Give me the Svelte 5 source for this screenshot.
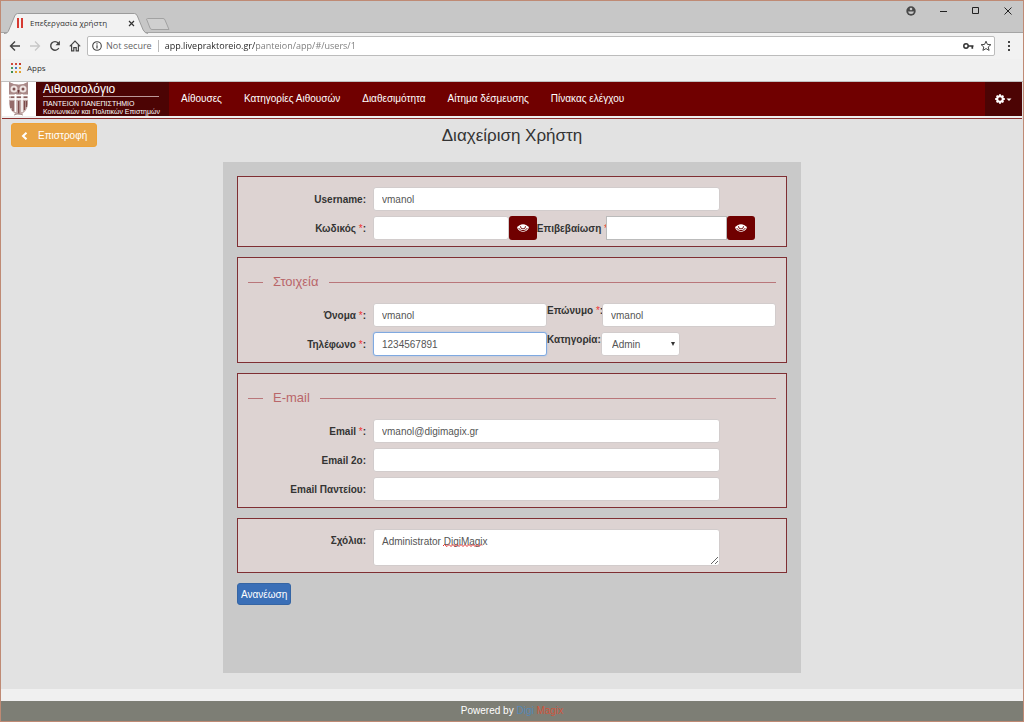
<script>
	let user = $state({
		username: 'vmanol',
		password: '',
		confirm: '',
		name: 'vmanol',
		surname: 'vmanol',
		phone: '1234567891',
		role: 'Admin',
		email: 'vmanol@digimagix.gr',
		email2: '',
		emailPanteion: '',
		comments: 'Administrator DigiMagix'
	});
	let address = $state('app.livepraktoreio.gr/panteion/app/#/users/1');
	let showPassword = $state(false);
	let showConfirm = $state(false);

	const menu = ['Αίθουσες', 'Κατηγορίες Αιθουσών', 'Διαθεσιμότητα', 'Αίτημα δέσμευσης', 'Πίνακας ελέγχου'];
	const dots = ['#d04a3c', '#d04a3c', '#c23a2c', '#4a9a5a', '#4a78c8', '#e0a030', '#3f8f50', '#e0a030', '#e0a030'];
</script>

{#snippet eye()}
	<svg width="12" height="10" viewBox="0 0 12 10">
		<path d="M0 4.800C2.500 0 9.500 0 12 4.800 9.500 10 2.500 10 0 4.800Z" fill="#fff" />
		<path d="M1.800 5.200C3.500 8.400 8.500 8.400 10.200 5.200" fill="none" stroke="#700000" />
		<path d="M3.500 3.200Q3.200 5.800 6 5.900 8.800 5.800 8.500 3.200" fill="none" stroke="#700000" stroke-width=".9" />
	</svg>
{/snippet}

<div class="window">
	<div class="titlebar">
		<div class="tab">
			<svg class="shape" width="146" height="21" viewBox="0 0 150 21" preserveAspectRatio="none">
				<path d="M0 20.500C3 20.500 4 19.500 5 17L11 3Q12 .5 14 .5H134Q136 .5 137 3L143 17Q145 20.500 148 20.500V21H0Z" fill="#f2f2f2" />
				<path d="M0 20.500C3 20.500 4 19.500 5 17L11 3Q12 .5 14 .5H134Q136 .5 137 3L143 17Q145 20.500 148 20.500" fill="none" stroke="#999" />
			</svg>
			<svg class="favicon" width="8" height="10" viewBox="0 0 8 10">
				<path d="M1 0h2v10H1zM5 0h2v10H5z" fill="#d63a32" />
			</svg>
			<span class="tab-title">Επεξεργασία χρήστη</span>
			<button class="plain" aria-label="Close tab">
				<svg width="7" height="7" viewBox="0 0 7 7"><path d="M1 1l5 5M6 1l-5 5" stroke="#333" stroke-width="1.200" /></svg>
			</button>
		</div>
		<button class="plain new-tab" aria-label="New tab">
			<svg width="24" height="12" viewBox="0 0 24 12">
				<path d="M1.500 .5H17Q18.500 .5 19 2L23 11.500H6Q4.500 11.500 4 10L.5 1Z" fill="#cfcfcf" stroke="#a2a2a2" />
			</svg>
		</button>
		<div class="controls">
			<button class="plain" aria-label="Profile">
				<svg width="10" height="10" viewBox="0 0 10 10">
					<circle cx="5" cy="5" r="4.700" fill="#484848" />
					<circle cx="5" cy="3" r="1.300" fill="#c9c9c9" />
					<path d="M2 5.500h6Q7.500 8 5 8T2 5.500Z" fill="#c9c9c9" />
				</svg>
			</button>
			<button class="plain" aria-label="Minimize">
				<svg width="8" height="8" viewBox="0 0 8 8"><path d="M0 4.500h7" stroke="#222" /></svg>
			</button>
			<button class="plain" aria-label="Maximize">
				<svg width="8" height="8" viewBox="0 0 8 8"><path d="M.5 .5h6v6h-6z" fill="none" stroke="#222" /></svg>
			</button>
			<button class="plain" aria-label="Close">
				<svg width="8" height="8" viewBox="0 0 8 8"><path d="M.5 .5l7 7M7.500 .5l-7 7" stroke="#222" /></svg>
			</button>
		</div>
	</div>

	<div class="toolbar">
		<button class="plain" aria-label="Back">
			<svg width="12" height="12" viewBox="0 0 12 12"><path d="M11 6H1.500M6 1.500L1.500 6 6 10.500" fill="none" stroke="#444" stroke-width="1.400" /></svg>
		</button>
		<button class="plain" aria-label="Forward">
			<svg width="12" height="12" viewBox="0 0 12 12"><path d="M1 6h9.500M6 1.500L10.500 6 6 10.500" fill="none" stroke="#c8c8c8" stroke-width="1.300" /></svg>
		</button>
		<button class="plain" aria-label="Reload">
			<svg width="12" height="12" viewBox="0 0 12 12">
				<path d="M9.800 8A4.300 4.300 0 1 1 9.200 3" fill="none" stroke="#444" stroke-width="1.400" />
				<path d="M10.900 .8v4.400H6.500z" fill="#444" />
			</svg>
		</button>
		<button class="plain" aria-label="Home">
			<svg width="12" height="12" viewBox="0 0 12 12"><path d="M.8 6.300L6 1l5.200 5.300M2.600 5v5.900h2.200V7.600h2.400v3.300h2.200V5" fill="none" stroke="#444" stroke-width="1.200" /></svg>
		</button>
		<div class="omnibox">
			<svg width="10" height="10" viewBox="0 0 10 10">
				<circle cx="5" cy="5" r="4.300" fill="none" stroke="#444" stroke-width="1.100" />
				<path d="M5 4.300v3.200M5 2.300v1.200" stroke="#444" stroke-width="1.200" />
			</svg>
			<span class="secure">Not secure</span>
			<input class="address" aria-label="Address" bind:value={address} />
			<svg width="11" height="8" viewBox="0 0 11 8">
				<circle cx="3" cy="4" r="2.200" fill="none" stroke="#333" stroke-width="1.500" />
				<path d="M5 4h5.500M9.300 4v2.700" stroke="#333" stroke-width="1.700" />
			</svg>
			<svg width="12" height="12" viewBox="0 0 12 12">
				<path d="M6 1.200l1.400 3.200 3.500.3-2.700 2.300.9 3.400L6 8.600l-3.100 1.800.9-3.400L1.100 4.700l3.500-.3z" fill="none" stroke="#444" />
			</svg>
		</div>
		<button class="plain more" aria-label="Menu">
			<svg width="4" height="12" viewBox="0 0 4 12"><path d="M1 1h2v2H1zM1 5h2v2H1zM1 9h2v2H1z" fill="#444" /></svg>
		</button>
	</div>
	<div class="bookmarks">
		<svg width="10" height="10" viewBox="0 0 10 10">
			{#each dots as fill, i}
				<rect x={(i % 3) * 4} y={Math.floor(i / 3) * 4} width="2" height="2" {fill} />
			{/each}
		</svg>
		<span>Apps</span>
	</div>

	<div class="page">
		<nav>
			<svg class="owl" width="34" height="34" viewBox="0 0 34 34">
				<path d="M7 0Q17 5 26 0V22Q25 31 17 33 8 31 7 22Z" fill="#c3aaa8" />
				<path d="M7 0Q17 6 26 0V12H7Z" fill="#a98988" />
				<circle cx="12" cy="7" r="3.500" fill="#eee4e2" />
				<circle cx="21" cy="7" r="3.500" fill="#eee4e2" />
				<circle cx="12" cy="7" r="1.500" fill="#7c5151" />
				<circle cx="21" cy="7" r="1.500" fill="#7c5151" />
				<path d="M15.500 8h2l-1 4z" fill="#6b3838" />
				<path d="M7 13.500h19M7 17h19" stroke="#fff" stroke-width="1.500" />
				<path d="M13.500 12v18M20 12v18" stroke="#fff" stroke-width="1.500" />
				<path d="M9 19v7M11 19v10M22.500 19v9M24.500 19v6M16.700 19v13" stroke="#7c4a4a" stroke-width="1.300" />
				<path d="M9 15.200h3M15 15.200h4M22 15.200h3" stroke="#87605f" stroke-width="1.500" />
				<path d="M12 33q4-3 9 0" fill="none" stroke="#a58c8a" />
			</svg>
			<a class="brand" href="#/">
				<span class="name">Αιθουσολόγιο</span>
				<span class="org">ΠΑΝΤΕΙΟΝ ΠΑΝΕΠΙΣΤΗΜΙΟ</span>
				<span class="org">Κοινωνικών και Πολιτικών Επιστημών</span>
			</a>
			<div class="menu">
				{#each menu as item}
					<a href="#/">{item}</a>
				{/each}
			</div>
			<button class="settings" aria-label="Ρυθμίσεις">
				<svg width="18" height="10" viewBox="0 0 18 10">
					<circle cx="5" cy="5" r="2.800" fill="none" stroke="#fff" stroke-width="2" />
					<path d="M5 .2v2M5 7.800v2M.2 5h2M7.800 5h2M1.600 1.600l1.400 1.400M7 7l1.400 1.400M8.400 1.600L7 3M3 7L1.600 8.400" stroke="#fff" stroke-width="1.900" />
					<path d="M11.500 4.500h5L14 7z" fill="#fff" />
				</svg>
			</button>
		</nav>

		<header>
			<button class="back">
				<svg width="7" height="8" viewBox="0 0 7 8"><path d="M5.500 .7L2 4l3.500 3.300" fill="none" stroke="#fff" stroke-width="2" /></svg>
				Επιστροφή
			</button>
			<h1>Διαχείριση Χρήστη</h1>
		</header>

		<form onsubmit={(e) => e.preventDefault()}>
			<section>
				<div class="row short">
					<label for="username">Username:</label>
					<input id="username" bind:value={user.username} />
				</div>
				<div class="row passwords">
					<label for="password">Κωδικός <i>*</i>:</label>
					<input id="password" type={showPassword ? 'text' : 'password'} bind:value={user.password} />
					<button class="eye" type="button" aria-label="Εμφάνιση κωδικού" onclick={() => (showPassword = !showPassword)}>{@render eye()}</button>
					<label class="second confirm" for="confirm">Επιβεβαίωση <i>*</i></label>
					<input class="square" id="confirm" type={showConfirm ? 'text' : 'password'} bind:value={user.confirm} />
					<button class="eye" type="button" aria-label="Εμφάνιση επιβεβαίωσης" onclick={() => (showConfirm = !showConfirm)}>{@render eye()}</button>
				</div>
			</section>

			<section>
				<h2>Στοιχεία</h2>
				<div class="row">
					<label for="name">Όνομα <i>*</i>:</label>
					<input id="name" bind:value={user.name} />
					<label class="second top surname" for="surname">Επώνυμο <i>*</i>:</label>
					<input id="surname" bind:value={user.surname} />
				</div>
				<div class="row contact">
					<label for="phone">Τηλέφωνο <i>*</i>:</label>
					<input class="focused" id="phone" bind:value={user.phone} />
					<label class="second top role" for="role">Κατηγορία:</label>
					<select id="role" bind:value={user.role}>
						<option>Admin</option>
						<option>User</option>
					</select>
				</div>
			</section>

			<section>
				<h2>E-mail</h2>
				<div class="row short">
					<label for="email">Email <i>*</i>:</label>
					<input id="email" bind:value={user.email} />
				</div>
				<div class="row short">
					<label for="email2">Email 2ο:</label>
					<input id="email2" bind:value={user.email2} />
				</div>
				<div class="row short">
					<label for="email-panteion">Email Παντείου:</label>
					<input id="email-panteion" bind:value={user.emailPanteion} />
				</div>
			</section>

			<section>
				<div class="row short comments">
					<label for="comments">Σχόλια:</label>
					<div class="area">
						<textarea id="comments" spellcheck="false" bind:value={user.comments}></textarea>
						<svg class="squiggle" width="43" height="3" viewBox="0 0 43 3">
							<path d="M0 2l1.500-1.500L4 2.500 6 .5l2 2 2-2 2 2 2-2 2 2 2-2 2 2 2-2 2 2 2-2 2 2 2-2 2 2 2-2 2 2 2-2 1 1" fill="none" stroke="#e03030" />
						</svg>
					</div>
				</div>
			</section>

			<button class="submit" type="submit">Ανανέωση</button>
		</form>
	</div>

	<footer>Powered by <a href="#/"><span class="digi">Digi</span> <span class="magix">Magix</span></a></footer>
</div>

<style>
	:global(body) {
		margin: 0;
	}
	.window {
		display: flex;
		flex-direction: column;
		min-height: 100vh;
		box-sizing: border-box;
		border: 1px solid #bf8a74;
		background: #f0f0f0;
		font: 10px/14px "Liberation Sans", Arial, sans-serif;
		color: #333;
	}
	svg {
		display: block;
		flex: none;
	}
	button, input, select, textarea {
		font: inherit;
		box-sizing: border-box;
		margin: 0;
	}
	a {
		color: inherit;
		text-decoration: none;
	}
	.plain {
		border: 0;
		padding: 0;
		background: none;
	}

	/* browser frame */
	.titlebar {
		display: flex;
		align-items: flex-end;
		height: 32px;
		background: #c7c7c7;
		box-shadow: inset 0 -1px #a5a5a5;
		font: 9px/12px "Open Sans", "Noto Sans", sans-serif;
	}
	.tab {
		position: relative;
		display: flex;
		align-items: center;
		width: 146px;
		height: 20px;
		margin-left: 3px;
		padding: 0 15px 0 12px;
		box-sizing: border-box;
	}
	.tab > * {
		position: relative;
	}
	.tab .shape {
		position: absolute;
		left: 0;
		top: 0;
	}
	.tab-title {
		flex: 1;
		margin-left: 6px;
		font-size: 8px;
		white-space: nowrap;
	}
	.new-tab {
		margin: 0 0 3px -4px;
	}
	.controls {
		display: flex;
		align-items: center;
		gap: 24px;
		margin: 0 11px 0 auto;
		align-self: flex-start;
		height: 19px;
	}
	.toolbar {
		display: flex;
		align-items: center;
		gap: 8px;
		height: 26px;
		padding: 0 8px;
		background: #f2f2f2;
		font: 9px/12px "Open Sans", "Noto Sans", sans-serif;
	}
	.omnibox {
		flex: 1;
		display: flex;
		align-items: center;
		gap: 6px;
		height: 20px;
		margin-left: -2px;
		padding: 0 2px 0 4px;
		box-sizing: border-box;
		border: 1px solid #bcbcbc;
		border-radius: 2px;
		background: #fff;
	}
	.secure {
		padding-right: 6px;
		margin-left: -2px;
		border-right: 1px solid #bbb;
		color: #666;
	}
	.address {
		flex: 1;
		min-width: 0;
		padding: 0;
		border: 0;
		outline: 0;
		/* the host part is darker than the path */
		background: linear-gradient(90deg, #222 90px, #777 90px) text;
		-webkit-text-fill-color: transparent;
	}
	.more {
		margin: 0 4px;
	}
	.bookmarks {
		display: flex;
		align-items: center;
		gap: 6px;
		height: 18px;
		padding: 0 10px 4px;
		border-bottom: 1px solid #c0c0c0;
		font: 8px/12px "Open Sans", "Noto Sans", sans-serif;
	}

	/* application */
	.page {
		flex: 1;
		margin-bottom: 12px;
		background: #e2e2e2;
	}
	nav {
		display: flex;
		height: 34px;
		margin: 0 1px;
		background: #700000;
		color: #fff;
		box-shadow: 0 2px #eee, 0 3px #8a3030;
	}
	.owl {
		background: #fff;
	}
	.brand {
		width: 133px;
		padding: 0 7px;
		box-sizing: border-box;
		background: #4c0404;
		white-space: nowrap;
	}
	.brand span {
		display: block;
	}
	.name {
		margin: 0 3px 3px 0;
		border-bottom: 1px solid #b99;
		font-size: 12px;
		line-height: 14px;
	}
	.org {
		font-size: 7px;
		line-height: 8px;
	}
	.menu {
		display: flex;
		flex: 1;
		align-items: center;
		gap: 22px;
		padding-left: 12px;
	}
	.settings {
		display: flex;
		align-items: center;
		justify-content: center;
		width: 37px;
		padding: 0;
		border: 0;
		background: #4c0404;
	}
	header {
		display: grid;
		grid-template-columns: 1fr auto 1fr;
		margin: 7px 10px 13px;
	}
	.back {
		display: flex;
		align-items: center;
		justify-self: start;
		gap: 10px;
		height: 24px;
		padding: 2px 9px 0;
		border: 1px solid #eea236;
		border-radius: 3px;
		background: #e9a545;
		color: #fff;
	}
	h1 {
		margin: 0;
		font-size: 17px;
		line-height: 26px;
		font-weight: 400;
	}
	form {
		display: flex;
		flex-direction: column;
		gap: 10px;
		margin: 0 222px 16px;
		padding: 14px 14px 68px;
		background: #c9c9c9;
	}
	section {
		display: flex;
		flex-direction: column;
		gap: 5px;
		padding: 10px 10px 6px;
		border: 1px solid #7f2f33;
		background: #ddd3d2;
	}
	h2 {
		display: flex;
		align-items: center;
		gap: 10px;
		margin: 0 0 2px;
		font-size: 13px;
		line-height: 28px;
		font-weight: 400;
		color: #b9666a;
	}
	h2::before, h2::after {
		content: "";
		width: 15px;
		height: 1px;
		background: #b9767a;
	}
	h2::after {
		flex: 1;
	}
	.row {
		display: flex;
		align-items: center;
	}
	.short {
		padding-right: 56px;
	}
	.passwords {
		padding-right: 21px;
	}
	.contact {
		padding-right: 96px;
	}
	label {
		flex: none;
		width: 118px;
		margin-right: 7px;
		padding-top: 2px;
		text-align: right;
		font-weight: 700;
		white-space: nowrap;
	}
	label i {
		font-weight: 400;
		font-style: normal;
		color: #e33;
	}
	.second {
		margin: 0;
		text-align: left;
	}
	.confirm {
		width: 69px;
	}
	.surname {
		width: 55px;
	}
	.role {
		width: 54px;
	}
	.top {
		align-self: flex-start;
		padding-top: 1px;
	}
	.row input, select, textarea {
		flex: 1 1 0;
		min-width: 0;
		height: 24px;
		padding: 0 8px;
		border: 1px solid #d2cccc;
		border-radius: 3px;
		background: #fff;
		color: #555;
	}
	.passwords input {
		flex-grow: 8;
	}
	.passwords .square {
		flex-grow: 7;
		border-color: #bbb;
		border-radius: 0;
	}
	.row .focused {
		border-color: #7fa9e0;
		box-shadow: 0 0 2px #9fc0ea;
	}
	select {
		flex: none;
		width: 79px;
		padding: 2px 10px 0;
		appearance: none;
		background: #fff url("data:image/svg+xml,%3Csvg xmlns='http://www.w3.org/2000/svg' viewBox='0 0 5 5'%3E%3Cpath d='M0 0h5L2.500 5z' fill='%23333'/%3E%3C/svg%3E") no-repeat right 4px center / 4px 4px;
	}
	.eye {
		display: flex;
		align-items: center;
		justify-content: center;
		width: 28px;
		height: 24px;
		padding: 0;
		border: 0;
		border-radius: 3px;
		background: #700000;
	}
	.comments {
		align-items: flex-start;
	}
	.comments label {
		padding-top: 5px;
	}
	.area {
		position: relative;
		display: flex;
		flex: 1;
	}
	textarea {
		height: 37px;
		padding: 5px 8px;
		resize: vertical;
	}
	.squiggle {
		position: absolute;
		left: 70px;
		top: 15px;
	}
	.submit {
		align-self: flex-start;
		height: 22px;
		padding: 1px 3px 0;
		border: 1px solid #3565a4;
		border-radius: 3px;
		background: #3a6fb7;
		color: #fff;
	}
	footer {
		height: 20px;
		line-height: 20px;
		background: #7d7e75;
		color: #fff;
		text-align: center;
	}
	.digi {
		color: #5488b5;
	}
	.magix {
		color: #d0553c;
	}
</style>
